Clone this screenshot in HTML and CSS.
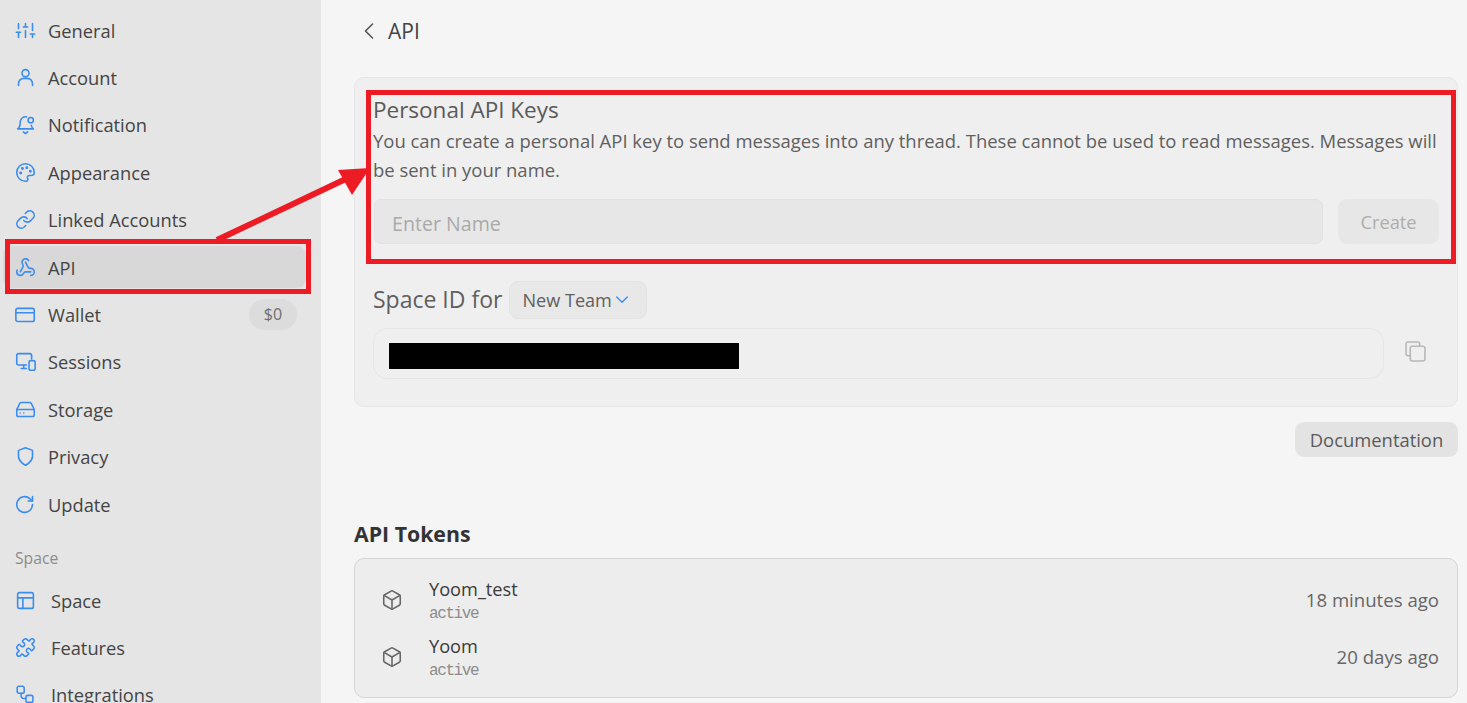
FILE: index.html
```html
<!DOCTYPE html>
<html lang="en">
<head>
<meta charset="utf-8">
<title>API Settings</title>
<link rel="stylesheet" href="styles.css">
</head>
<body>
<div class="app">
  <nav class="sidebar">
    <a class="item"><svg class="ic" viewBox="0 0 24 24"><path d="M4 20v-6M4 10V4M12 20v-8M12 8V4M20 20v-4M20 12V4M1.5 14h5M9.5 8h5M17.5 16h5"/></svg><span>General</span></a>
    <a class="item"><svg class="ic" viewBox="0 0 24 24"><circle cx="12" cy="7" r="4"/><path d="M4 21v-2a6 6 0 0 1 6-6h4a6 6 0 0 1 6 6v2"/></svg><span>Account</span></a>
    <a class="item"><svg class="ic" viewBox="0 0 24 24"><path d="M13 3.3A6 6 0 0 0 6 9c0 6-3 8-3 8h18s-1.5-1-2.4-4"/><circle cx="18" cy="7" r="3"/><path d="M9.5 20.5l2.5 1.8 2.5-1.8"/></svg><span>Notification</span></a>
    <a class="item"><svg class="ic" viewBox="0 0 24 24"><path d="M12 22a10 10 0 1 1 10-10c0 2.5-2 3.5-4 3.5h-2a2 2 0 0 0-1.5 3.3c.5.7.3 1.7-.3 2.4-.6.5-1.4.8-2.2.8z"/><circle class="dot" cx="13.5" cy="6.5" r=".8"/><circle class="dot" cx="17.5" cy="10.5" r=".8"/><circle class="dot" cx="8.5" cy="7.5" r=".8"/><circle class="dot" cx="6.5" cy="12.5" r=".8"/></svg><span>Appearance</span></a>
    <a class="item"><svg class="ic" viewBox="0 0 24 24"><path d="M10 13a5 5 0 0 0 7.54.54l3-3a5 5 0 0 0-7.07-7.07l-1.72 1.71"/><path d="M14 11a5 5 0 0 0-7.54-.54l-3 3a5 5 0 0 0 7.07 7.07l1.71-1.71"/></svg><span>Linked Accounts</span></a>
    <a class="item active"><svg class="ic" viewBox="0 0 24 24"><path d="M18 16.98h-5.99c-1.1 0-1.95.94-2.48 1.9A4 4 0 0 1 2 17c.01-.7.2-1.4.57-2"/><path d="m6 17 3.13-5.78c.53-.97.1-2.18-.5-3.1a4 4 0 1 1 6.89-4.06"/><path d="m12 6 3.13 5.73C15.66 12.7 16.9 13 18 13a4 4 0 0 1 0 8"/></svg><span>API</span></a>
    <a class="item wallet"><svg class="ic" viewBox="0 0 24 24"><rect x="1" y="5" width="21" height="15" rx="2"/><path d="M1 10h21"/></svg><span>Wallet</span><em class="badge">$0</em></a>
    <a class="item"><svg class="ic" viewBox="0 0 24 24"><path d="M13 16H4a2 2 0 0 1-2-2V5a2 2 0 0 1 2-2h13a2 2 0 0 1 2 2v4"/><path d="M7 20h6M10 16v4"/><rect x="16" y="11" width="7" height="11" rx="2"/></svg><span>Sessions</span></a>
    <a class="item"><svg class="ic" viewBox="0 0 24 24"><path d="M2 12h20"/><path d="M5.45 5.11 2 12v6a2 2 0 0 0 2 2h16a2 2 0 0 0 2-2v-6l-3.45-6.89A2 2 0 0 0 16.76 4H7.24a2 2 0 0 0-1.79 1.11z"/><path d="M6 16h.01M10 16h.01"/></svg><span>Storage</span></a>
    <a class="item"><svg class="ic" viewBox="0 0 24 24"><path d="M12 22s8-4 8-10V5l-8-3-8 3v7c0 6 8 10 8 10z"/></svg><span>Privacy</span></a>
    <a class="item"><svg class="ic" viewBox="0 0 24 24"><path d="M20 12a9 9 0 1 1-3-6.7L20 8"/><path d="M20 3v5h-5"/></svg><span>Update</span></a>
    <div class="group">Space</div>
    <a class="item sub"><svg class="ic" viewBox="0 0 24 24"><rect x="3" y="3" width="18" height="18" rx="2"/><path d="M3 9h18M9 21V9"/></svg><span>Space</span></a>
    <a class="item sub"><svg class="ic" viewBox="0 0 24 24"><path d="M19.439 7.85c-.049.322.059.648.289.878l1.568 1.568c.47.47.706 1.087.706 1.704s-.235 1.233-.706 1.704l-1.611 1.611a.98.98 0 0 1-.837.276c-.47-.07-.802-.48-.968-.925a2.501 2.501 0 1 0-3.214 3.214c.446.166.855.497.925.968a.979.979 0 0 1-.276.837l-1.61 1.61a2.404 2.404 0 0 1-1.705.707 2.402 2.402 0 0 1-1.704-.706l-1.568-1.568a1.026 1.026 0 0 0-.877-.29c-.493.074-.84.504-1.02.968a2.5 2.5 0 1 1-3.237-3.237c.464-.18.894-.527.967-1.02a1.026 1.026 0 0 0-.289-.877l-1.568-1.568A2.402 2.402 0 0 1 1.998 12c0-.617.236-1.234.706-1.704L4.23 8.77c.24-.24.581-.353.917-.303.515.077.877.528 1.073 1.01a2.5 2.5 0 1 0 3.259-3.259c-.482-.196-.933-.558-1.01-1.073-.05-.336.062-.676.303-.917l1.525-1.525A2.402 2.402 0 0 1 12 1.998c.617 0 1.234.236 1.704.706l1.568 1.568c.23.23.556.338.877.29.493-.074.84-.504 1.02-.968a2.5 2.5 0 1 1 3.237 3.237c-.464.18-.894.527-.967 1.02Z"/></svg><span>Features</span></a>
    <a class="item sub"><svg class="ic" viewBox="0 0 24 24"><rect x="2.5" y="2.5" width="8" height="8" rx="2"/><rect x="12.5" y="13" width="8" height="8" rx="2"/><path d="M7 10.5v3a3 3 0 0 0 3 3h2.5"/></svg><span>Integrations</span></a>
  </nav>

  <main class="main">
    <header class="head">
      <svg class="back" viewBox="0 0 10 16"><path d="M8.5 1 1.5 8l7 7"/></svg>
      <h1>API</h1>
    </header>

    <section class="card">
      <h2>Personal API Keys</h2>
      <p class="desc">You can create a personal API key to send messages into any thread. These cannot be used to read messages. Messages will be sent in your name.</p>
      <div class="form">
        <div class="input">Enter Name</div>
        <div class="create">Create</div>
      </div>
      <div class="space-row">
        <span class="space-label">Space ID for</span>
        <div class="select"><span>New Team</span><svg class="chev" viewBox="0 0 24 24"><path d="m3 7 9 9 9-9"/></svg></div>
      </div>
      <div class="id-row">
        <div class="id-field"><div class="redact"></div></div>
        <svg class="copy" viewBox="0 0 20 20"><rect x="5" y="5" width="14" height="14" rx="2"/><path d="M14 5V3a2 2 0 0 0-2-2H3a2 2 0 0 0-2 2v9a2 2 0 0 0 2 2h2"/></svg>
      </div>
    </section>

    <div class="doc-row"><div class="doc">Documentation</div></div>

    <h3>API Tokens</h3>
    <section class="tokens">
      <div class="token">
        <svg class="cube" viewBox="0 0 24 24"><path d="M21 8a2 2 0 0 0-1-1.73l-7-4a2 2 0 0 0-2 0l-7 4A2 2 0 0 0 3 8v8a2 2 0 0 0 1 1.73l7 4a2 2 0 0 0 2 0l7-4A2 2 0 0 0 21 16Z"/><path d="m3.3 7 8.7 5 8.7-5M12 22V12"/></svg>
        <div class="tk-text"><div class="tk-name">Yoom_test</div><div class="tk-state">active</div></div>
        <div class="tk-time">18 minutes ago</div>
      </div>
      <div class="token">
        <svg class="cube" viewBox="0 0 24 24"><path d="M21 8a2 2 0 0 0-1-1.73l-7-4a2 2 0 0 0-2 0l-7 4A2 2 0 0 0 3 8v8a2 2 0 0 0 1 1.73l7 4a2 2 0 0 0 2 0l7-4A2 2 0 0 0 21 16Z"/><path d="m3.3 7 8.7 5 8.7-5M12 22V12"/></svg>
        <div class="tk-text"><div class="tk-name">Yoom</div><div class="tk-state">active</div></div>
        <div class="tk-time">20 days ago</div>
      </div>
    </section>
  </main>
</div>

<div class="mark mark-api"></div>
<div class="mark mark-card"></div>
<svg class="arrow" viewBox="0 0 1467 703"><path d="M217 240 352 176"/><polygon points="370,168 338,170 352,195"/></svg>
</body>
</html>
```

FILE: styles.css
```css
* { box-sizing: border-box; }
html, body { margin: 0; height: 703px; overflow: hidden; }
body {
  background: #f5f5f5;
  color: #444;
  font-family: "Open Sans", "Noto Sans", sans-serif;
}
.app { display: flex; height: 703px; }

.sidebar {
  width: 321px;
  flex: none;
  height: 703px;
  overflow: hidden;
  background: #e5e5e5;
  padding: 9.2px 15px 0 3px;
  display: flex;
  flex-direction: column;
  gap: 5.4px;
}
.item {
  flex: none;
  display: flex;
  align-items: center;
  height: 42px;
  padding-left: 12px;
  border-radius: 9px;
  font-size: 18.3px;
  color: #444;
  gap: 12px;
}
.item.active { background: #d8d8d8; }
.item.sub { gap: 15px; }
.item.wallet { padding-right: 9px; }
.ic {
  width: 21px;
  height: 21px;
  flex: none;
  fill: none;
  stroke: #3b8cf0;
  stroke-width: 1.8;
  stroke-linecap: round;
  stroke-linejoin: round;
}
.ic .dot { fill: #3b8cf0; }
.badge {
  margin-left: auto;
  width: 48px;
  height: 31px;
  border-radius: 16px;
  background: #dcdcdc;
  color: #6e6e6e;
  font-style: normal;
  font-size: 16px;
  line-height: 31px;
  text-align: center;
}
.group {
  flex: none;
  height: 22px;
  margin: 17px 0 4.3px 12px;
  font-size: 15.7px;
  line-height: 22px;
  color: #8c8c8c;
}

.main {
  flex: 1;
  min-width: 0;
  padding: 0 9px 0 33px;
}
.head {
  display: flex;
  align-items: center;
  height: 61px;
  padding-left: 10px;
  gap: 14px;
}
.back {
  width: 10px;
  height: 16px;
  flex: none;
  fill: none;
  stroke: #555;
  stroke-width: 1.6;
  stroke-linecap: round;
  stroke-linejoin: round;
}
h1 { margin: 0; font-size: 21px; font-weight: 400; color: #444; }

.card {
  margin-top: 16px;
  height: 330px;
  padding: 18px 18px 0;
  background: #efefef;
  border: 1px solid #e6e6e6;
  border-radius: 10px;
}
h2 {
  margin: 0;
  font-size: 22.5px;
  line-height: 28px;
  font-weight: 400;
  color: #5a5a5a;
}
.desc {
  margin: 2px 0 0;
  font-size: 18.47px;
  line-height: 29px;
  color: #5f5f5f;
}
.form { display: flex; gap: 15px; margin-top: 15px; height: 45px; }
.input {
  flex: 1;
  margin-left: 1px;
  padding-left: 17px;
  background: #e7e7e7;
  border: 1px solid #e2e2e2;
  border-radius: 7px;
  font-size: 19.6px;
  line-height: 47px;
  color: #aaa;
}
.create {
  width: 101px;
  background: #e7e7e7;
  border-radius: 9px;
  text-align: center;
  font-size: 18.3px;
  line-height: 45px;
  color: #aeaeae;
}
.space-row { display: flex; align-items: center; gap: 7px; margin-top: 37px; height: 38px; }
.space-label { font-size: 23px; line-height: 34px; padding-bottom: 2px; color: #5f5f5f; }
.select {
  display: flex;
  align-items: center;
  gap: 3px;
  width: 138px;
  height: 38px;
  padding-left: 12px;
  background: #e8e8e8;
  border: 1px solid #e3e3e3;
  border-radius: 9px;
  font-size: 18.1px;
  color: #5f5f5f;
}
.chev {
  width: 14px;
  height: 14px;
  flex: none;
  fill: none;
  stroke: #3b8cf0;
  stroke-width: 2.4;
  stroke-linecap: round;
  stroke-linejoin: round;
}
.id-row { display: flex; align-items: center; margin-top: 9px; gap: 21px; }
.id-field {
  flex: none;
  width: 1011px;
  height: 51px;
  padding: 14px 15px;
  border: 1px solid #e6e6e6;
  border-radius: 14px;
}
.redact { width: 350px; height: 26px; background: #000; }
.copy {
  width: 21px;
  height: 21px;
  flex: none;
  margin-bottom: 4px;
  fill: none;
  stroke: #b8b8b8;
  stroke-width: 1.5;
  stroke-linecap: round;
  stroke-linejoin: round;
}

.doc-row { display: flex; justify-content: flex-end; margin-top: 15px; }
.doc {
  width: 163px;
  height: 35px;
  background: #e3e3e3;
  border-radius: 9px;
  text-align: center;
  font-size: 18.4px;
  line-height: 36px;
  color: #5a5a5a;
}
h3 {
  margin: 63px 0 0;
  font-size: 21.3px;
  line-height: 28px;
  font-weight: 700;
  color: #333;
}
.tokens {
  margin-top: 10px;
  height: 140px;
  padding: 12px 18px 0 26px;
  background: #ededed;
  border: 1px solid #d6d6d6;
  border-radius: 10px;
}
.token { display: flex; align-items: center; height: 57px; gap: 26px; }
.cube {
  width: 22px;
  height: 22px;
  flex: none;
  fill: none;
  stroke: #666;
  stroke-width: 1.7;
  stroke-linecap: round;
  stroke-linejoin: round;
}
.tk-text { flex: 1; padding-top: 2px; }
.tk-name { font-size: 18.2px; line-height: 25px; color: #3a3a3a; }
.tk-state {
  margin-top: 2px;
  font-family: "Liberation Mono", monospace;
  font-size: 16px;
  letter-spacing: -1.4px;
  line-height: 20px;
  color: #8c8c8c;
}
.tk-time { font-size: 18.6px; color: #666; }

.mark { position: absolute; border: 5px solid #ed1c24; }
.mark-api { left: 5px; top: 239px; width: 306px; height: 55px; }
.mark-card { left: 366px; top: 90px; width: 1090px; height: 174px; }
.arrow { position: absolute; left: 0; top: 0; width: 1467px; height: 703px; pointer-events: none; }
.arrow path { stroke: #ed1c24; stroke-width: 6; fill: none; }
.arrow polygon { fill: #ed1c24; }
```
